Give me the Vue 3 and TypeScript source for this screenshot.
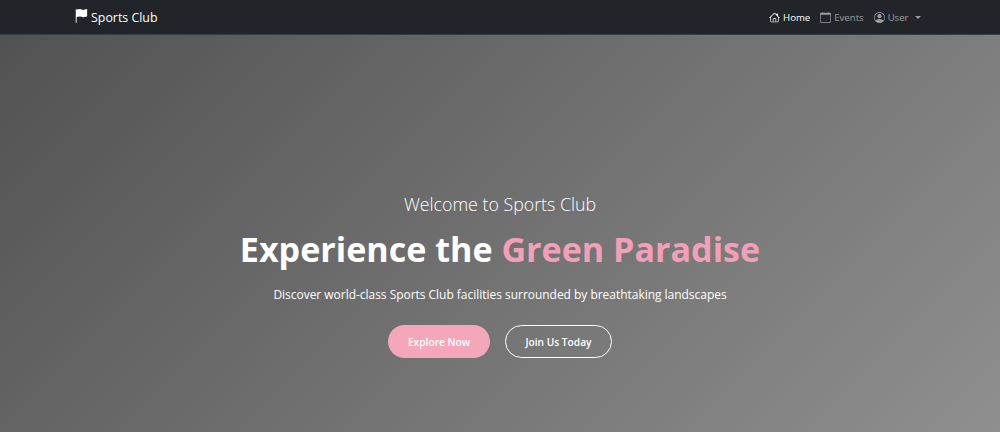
<script setup lang="ts">
const links = [
  { label: "Home", icon: "home", active: true },
  { label: "Events", icon: "calendar", active: false },
];
</script>

<template>
  <div class="page">
    <nav class="navbar">
      <a class="brand" href="#">
        <svg class="flag" viewBox="0 0 16 16" fill="currentColor">
          <path d="M14.778.085A.5.5 0 0 1 15 .5V8a.5.5 0 0 1-.314.464L14.5 8l.186.464-.003.001-.006.003-.023.009a12 12 0 0 1-.397.15c-.264.095-.631.223-1.047.35-.816.252-1.879.523-2.71.523-.847 0-1.548-.28-2.158-.525l-.028-.01C7.68 8.71 7.14 8.5 6.5 8.5c-.7 0-1.638.23-2.437.477A20 20 0 0 0 3 9.342V15.5a.5.5 0 0 1-1 0V.5a.5.5 0 0 1 1 0v.282c.226-.079.496-.17.79-.26C4.606.272 5.67 0 6.5 0c.84 0 1.524.277 2.121.519l.043.018C9.286.788 9.828 1 10.5 1c.7 0 1.638-.23 2.437-.477a20 20 0 0 0 1.349-.476l.019-.007.004-.002h.001" />
        </svg>
        <span>Sports Club</span>
      </a>
      <div class="links">
        <a v-for="link in links" :key="link.label" class="link" :class="{ active: link.active }" href="#">
          <svg v-if="link.icon === 'home'" class="icon" viewBox="0 0 16 16" fill="currentColor">
            <path d="M8.707 1.5a1 1 0 0 0-1.414 0L.646 8.146a.5.5 0 0 0 .708.708L2 8.207V13.5A1.5 1.5 0 0 0 3.5 15h9a1.5 1.5 0 0 0 1.5-1.5V8.207l.646.647a.5.5 0 0 0 .708-.708L13 5.793V2.5a.5.5 0 0 0-.5-.5h-1a.5.5 0 0 0-.5.5v1.293zM13 7.207V13.5a.5.5 0 0 1-.5.5h-9a.5.5 0 0 1-.5-.5V7.207l5-5zM6.5 14v-3.5a.5.5 0 0 1 .5-.5h2a.5.5 0 0 1 .5.5V14h1v-3.5A1.5 1.5 0 0 0 9 9H7a1.5 1.5 0 0 0-1.5 1.5V14z" />
          </svg>
          <svg v-else class="icon" viewBox="0 0 16 16" fill="currentColor">
            <path d="M3.5 0a.5.5 0 0 1 .5.5V1h8V.5a.5.5 0 0 1 1 0V1h1a2 2 0 0 1 2 2v11a2 2 0 0 1-2 2H2a2 2 0 0 1-2-2V3a2 2 0 0 1 2-2h1V.5a.5.5 0 0 1 .5-.5M1 4v10a1 1 0 0 0 1 1h12a1 1 0 0 0 1-1V4z" />
          </svg>
          <span>{{ link.label }}</span>
        </a>
        <a class="link user" href="#">
          <svg class="icon" viewBox="0 0 16 16" fill="currentColor">
            <path d="M11 6a3 3 0 1 1-6 0 3 3 0 0 1 6 0" />
            <path fill-rule="evenodd" d="M0 8a8 8 0 1 1 16 0A8 8 0 0 1 0 8m8-7a7 7 0 0 0-5.468 11.37C3.242 11.226 4.805 10 8 10s4.757 1.225 5.468 2.37A7 7 0 0 0 8 1" />
          </svg>
          <span>User</span>
          <i class="caret"></i>
        </a>
      </div>
    </nav>

    <section class="hero">
      <p class="welcome">Welcome to Sports Club</p>
      <h1>Experience the <span class="accent">Green Paradise</span></h1>
      <p class="lead">Discover world-class Sports Club facilities surrounded by breathtaking landscapes</p>
      <div class="actions">
        <a class="btn primary" href="#">Explore Now</a>
        <a class="btn outline" href="#">Join Us Today</a>
      </div>
    </section>
  </div>
</template>

<style>
html,
body {
  margin: 0;
  overflow: hidden;
}
</style>

<style scoped>
.page {
  width: 1000px;
  height: 432px;
  display: flex;
  flex-direction: column;
  font-family: "Open Sans", "Noto Sans", sans-serif;
  color: #fff;
}

a {
  color: inherit;
  text-decoration: none;
}

.navbar {
  height: 35px;
  box-sizing: border-box;
  flex: none;
  display: flex;
  align-items: center;
  justify-content: space-between;
  padding: 0 79px 0 74px;
  background: #212529;
  border-bottom: 1px solid #3a3d40;
}

.brand {
  display: flex;
  align-items: center;
  gap: 3px;
  font-size: 12.4px;
}

.flag {
  width: 14px;
  height: 14px;
  margin-top: -3px;
}

.links {
  display: flex;
  align-items: center;
  gap: 10px;
}

.link {
  display: flex;
  align-items: center;
  gap: 3px;
  font-size: 9.6px;
  color: rgba(255, 255, 255, 0.55);
}

.link.active {
  color: #fff;
  font-weight: 500;
}

.icon {
  width: 11px;
  height: 11px;
}

.caret {
  width: 0;
  height: 0;
  margin-left: 3.5px;
  border-top: 3.5px solid currentColor;
  border-left: 3.5px solid transparent;
  border-right: 3.5px solid transparent;
}

.hero {
  flex: 1;
  display: flex;
  flex-direction: column;
  align-items: center;
  padding-top: 158px;
  background: linear-gradient(135deg, #525252 0%, #8f8f8f 100%);
}

.welcome {
  margin: 0;
  font-size: 17.8px;
  font-weight: 300;
  line-height: 22px;
}

h1 {
  margin: 12px 0 0;
  font-size: 34.1px;
  font-weight: 700;
  line-height: 44px;
}

.accent {
  color: #f2a0b8;
}

.lead {
  margin: 15px 0 0;
  font-size: 11.95px;
  line-height: 18px;
}

.actions {
  display: flex;
  gap: 15px;
  margin-top: 21px;
}

.btn {
  height: 33px;
  box-sizing: border-box;
  display: flex;
  align-items: center;
  justify-content: center;
  border-radius: 17px;
  font-size: 10.2px;
  font-weight: 600;
}

.primary {
  width: 102px;
  background: #f4a6bb;
}

.outline {
  width: 107px;
  border: 1px solid #fff;
}
</style>
